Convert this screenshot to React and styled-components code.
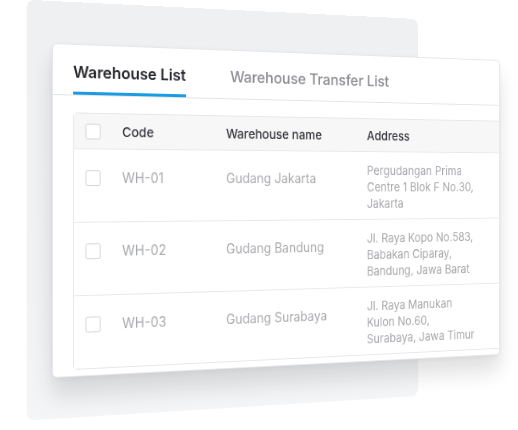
import styled, { createGlobalStyle } from "styled-components";

const GlobalStyle = createGlobalStyle`
  body {
    margin: 0;
    background: #ffffff;
    font-family: "Inter", "Roboto", "Liberation Sans", sans-serif;
    overflow: hidden;
  }
`;

const Stage = styled.div`
  width: 518px;
  height: 430px;
  overflow: hidden;
`;

// the two cards share one tilted plane
const Plane = styled.div`
  display: grid;
  width: 553px;
  height: 417px;
  margin: 1px 0 0 26px;
  transform-origin: 26px 184px;
  transform: perspective(1000px) rotateY(15deg);
`;

const BackCard = styled.div`
  grid-area: 1 / 1;
  width: 446px;
  height: 418px;
  border-radius: 8px;
  background: linear-gradient(180deg, #eff0f2 0%, #f1f2f4 70%, #f4f5f6 100%);
`;

const Card = styled.div`
  grid-area: 1 / 1;
  margin: 42px 0 0 26px;
  width: 527px;
  height: 335px;
  box-sizing: border-box;
  background: #ffffff;
  border: 1px solid #e6e7ea;
  border-radius: 5px;
  box-shadow: 0 18px 22px rgba(40, 44, 52, 0.14), 0 2px 6px rgba(40, 44, 52, 0.05);
  overflow: hidden;
`;

const Tabs = styled.div`
  display: flex;
  gap: 50px;
  padding: 0 21px;
  height: 50px;
  border-bottom: 1px solid #e3e4e7;
`;

const Tab = styled.div`
  display: flex;
  align-items: center;
  height: 100%;
  box-sizing: border-box;
  padding-top: 6px;
  font-size: 16.5px;
  font-weight: ${(p) => (p.$active ? 600 : 500)};
  letter-spacing: -0.1px;
  color: ${(p) => (p.$active ? "#26272d" : "#8b8c90")};
  border-bottom: 3px solid ${(p) => (p.$active ? "#1b9be2" : "transparent")};
  margin-bottom: -1px;
  white-space: nowrap;
`;

const Table = styled.div`
  margin: 17px 0 0 21px;
  width: 540px;
  border: 1px solid #e6e7ea;
  border-radius: 4px;
`;

const Row = styled.div`
  display: grid;
  grid-template-columns: 51px 115px 167px 1fr;
  align-items: center;
  height: ${(p) => (p.$head ? "35px" : "74px")};
  box-sizing: border-box;
  background: ${(p) => (p.$head ? "#f7f7f8" : "#ffffff")};
  border-top: ${(p) => (p.$first ? "none" : "1px solid #e8e9eb")};
  color: ${(p) => (p.$head ? "#34353a" : "#a9aaad")};
  font-size: ${(p) => (p.$head ? "13.5px" : "14px")};
  font-weight: ${(p) => (p.$head ? 500 : 400)};
`;

const Cell = styled.div`
  padding-bottom: ${(p) => (p.$raised ? "16px" : "0")};
  white-space: nowrap;
`;

const CheckCell = styled(Cell)`
  display: flex;
  padding-left: 12px;
`;

const Box = styled.span`
  width: 16px;
  height: 16px;
  box-sizing: border-box;
  border: 1px solid #d6d7da;
  border-radius: 2px;
  background: #ffffff;
`;

const Address = styled.div`
  font-size: 13px;
  line-height: 18px;
  color: #a7a8ab;
  padding-top: 2px;
`;

const rows = [
  { code: "WH-01", name: "Gudang Jakarta", address: ["Pergudangan Prima", "Centre 1 Blok F No.30,", "Jakarta"] },
  { code: "WH-02", name: "Gudang Bandung", address: ["Jl. Raya Kopo No.583,", "Babakan Ciparay,", "Bandung, Jawa Barat"] },
  { code: "WH-03", name: "Gudang Surabaya", address: ["Jl. Raya Manukan", "Kulon No.60,", "Surabaya, Jawa Timur"] },
];

function App() {
  return (
    <Stage>
      <GlobalStyle />
      <Plane>
        <BackCard />
        <Card>
          <Tabs>
            <Tab $active>Warehouse List</Tab>
            <Tab>Warehouse Transfer List</Tab>
          </Tabs>
          <Table>
            <Row $head $first>
              <CheckCell>
                <Box />
              </CheckCell>
              <Cell>Code</Cell>
              <Cell>Warehouse name</Cell>
              <Cell>Address</Cell>
            </Row>
            {rows.map((r) => (
              <Row key={r.code}>
                <CheckCell $raised>
                  <Box />
                </CheckCell>
                <Cell $raised>{r.code}</Cell>
                <Cell $raised>{r.name}</Cell>
                <Address>
                  {r.address.map((line) => (
                    <div key={line}>{line}</div>
                  ))}
                </Address>
              </Row>
            ))}
          </Table>
        </Card>
      </Plane>
    </Stage>
  );
}

export default App;
